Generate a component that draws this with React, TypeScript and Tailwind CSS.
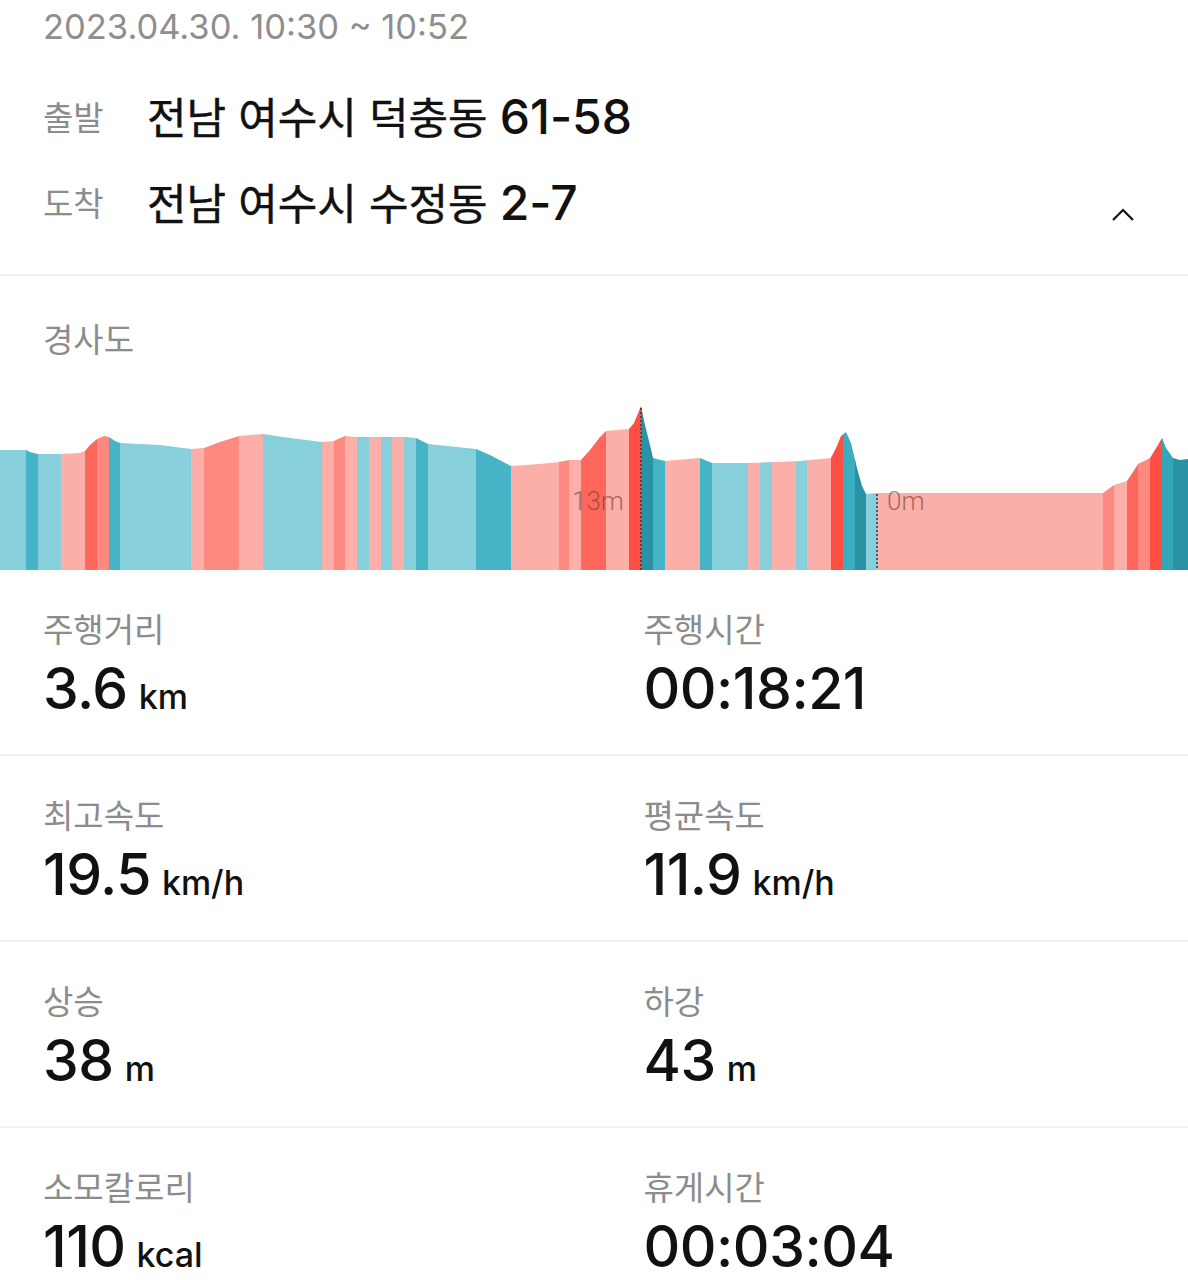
import React from 'react';

const L = '#86cfdb';
const T = '#45b4c7';
const D = '#2a93a3';
const P = '#fcaea9';
const S = '#fd8a80';
const R = '#ff675c';
const B = '#ff4f45';

// [start x, end x, colour] of each slope band
const BANDS: [number, number, string][] = [
  [0, 26, L], [26, 38, T], [38, 61, L], [61, 85, P], [85, 97, R], [97, 109, S],
  [109, 120, T], [120, 191, L], [191, 204, P], [204, 239, S], [239, 263, P],
  [263, 322, L], [322, 334, P], [334, 345, S], [345, 357, P], [357, 369, L],
  [369, 381, P], [381, 392, L], [392, 404, P], [404, 416, L], [416, 428, T],
  [428, 476, L], [476, 511, T], [511, 559, P], [559, 569, S], [569, 581, P],
  [581, 606, R], [606, 629, P], [629, 641, B], [641, 653, D], [653, 665, T],
  [665, 700, P], [700, 712, T], [712, 748, L], [748, 760, P], [760, 772, L],
  [772, 796, P], [796, 807, L], [807, 831, P], [831, 843, B], [843, 855, '#3aaec0'],
  [855, 866, D], [866, 877, L], [877, 1103, P], [1103, 1114, S], [1114, 1127, P],
  [1127, 1138, R], [1138, 1150, S], [1150, 1162, B], [1162, 1173, '#31a7b8'],
  [1173, 1188, D],
];

// elevation profile, page coordinates (chart spans y 380..570)
const PROFILE: [number, number][] = [
  [0, 450], [26, 450], [30, 452], [38, 454], [61, 454], [80, 453], [85, 451],
  [90, 445], [97, 439], [104, 436], [109, 437], [115, 441], [120, 443], [160, 445],
  [191, 449], [204, 448], [220, 442], [239, 436], [263, 434], [290, 438], [322, 442],
  [334, 441], [338, 439], [345, 436], [357, 437], [381, 437], [405, 437], [416, 438],
  [428, 444], [476, 449], [490, 455], [511, 466], [540, 464], [559, 462], [569, 460],
  [581, 460], [590, 450], [600, 437], [606, 431], [629, 429], [634, 423], [641, 406],
  [645, 425], [650, 445], [653, 458], [665, 461], [700, 458], [712, 463], [748, 463],
  [800, 461], [831, 458], [836, 448], [841, 436], [846, 432], [851, 443], [857, 468],
  [862, 486], [866, 494], [877, 493], [1103, 493], [1114, 485], [1127, 481],
  [1133, 472], [1138, 464], [1150, 458], [1158, 445], [1162, 438], [1166, 448],
  [1173, 458], [1180, 460], [1188, 459],
];

function SlopeChart() {
  const d =
    'M0 570 ' + PROFILE.map(([x, y]) => `L${x} ${y}`).join(' ') + ' L1188 570 Z';
  return (
    <svg width="1188" height="190" viewBox="0 380 1188 190" className="block">
      <defs>
        <clipPath id="profile">
          <path d={d} />
        </clipPath>
      </defs>
      <g clipPath="url(#profile)">
        {BANDS.map(([a, b, c]) => (
          <rect key={a} x={a} y={380} width={b - a + 0.5} height={190} fill={c} />
        ))}
      </g>
      <line x1="641" y1="408" x2="641" y2="570" stroke="#4a4a4a" strokeWidth="2" strokeDasharray="2 2" />
      <line x1="877" y1="494" x2="877" y2="570" stroke="#555" strokeWidth="2" strokeDasharray="2 2" />
      <text x="572" y="510" fontSize="26" fill="#6e3e3a" fillOpacity="0.65" fontFamily="Roboto, sans-serif" fontWeight="300">
        13m
      </text>
      <text x="887" y="510" fontSize="26" fill="#6e3e3a" fillOpacity="0.65" fontFamily="Roboto, sans-serif" fontWeight="300">
        0m
      </text>
    </svg>
  );
}

function Stat({ label, value, unit }: { label: string; value: string; unit?: string }) {
  return (
    <div className="flex flex-col">
      <span className="text-[33px] leading-[36px] text-[#8c8c8c]">{label}</span>
      <div className="mt-[11px] flex h-[60px] items-baseline font-medium leading-[60px] text-[#111]">
        <span className="text-[57px] tracking-[-0.5px]">{value}</span>
        {unit && <span className="ml-[11px] text-[34px] leading-none">{unit}</span>}
      </div>
    </div>
  );
}

const STATS: [string, string, string | undefined, string, string, string | undefined][] = [
  ['주행거리', '3.6', 'km', '주행시간', '00:18:21', undefined],
  ['최고속도', '19.5', 'km/h', '평균속도', '11.9', 'km/h'],
  ['상승', '38', 'm', '하강', '43', 'm'],
  ['소모칼로리', '110', 'kcal', '휴게시간', '00:03:04', undefined],
];

export default function App() {
  return (
    <div className="min-h-[1280px] w-[1188px] overflow-hidden bg-white font-['Inter','Noto_Sans_CJK_KR',sans-serif]">
      {/* 헤더 */}
      <div className="border-b-2 border-[#f2f2f2] px-[43px] pb-[42px] pt-[7px]">
        <div className="text-[34.5px] leading-[40px] text-[#8e8e8e]">2023.04.30. 10:30 ~ 10:52</div>
        <div className="mt-[43px] flex h-[56px] items-center">
          <span className="w-[104px] text-[33px] leading-[56px] text-[#8c8c8c]">출발</span>
          <span className="text-[43px] leading-[56px] text-[#111] [-webkit-text-stroke:0.4px_#111]">
            전남 여수시 덕충동{' '}
            <span className="text-[48px] font-medium leading-none [-webkit-text-stroke:0]">61-58</span>
          </span>
        </div>
        <div className="mt-[30px] flex h-[56px] items-center">
          <span className="w-[104px] text-[33px] leading-[56px] text-[#8c8c8c]">도착</span>
          <span className="text-[43px] leading-[56px] text-[#111] [-webkit-text-stroke:0.4px_#111]">
            전남 여수시 수정동{' '}
            <span className="text-[48px] font-medium leading-none [-webkit-text-stroke:0]">2-7</span>
          </span>
          <svg width="24" height="14" viewBox="0 0 24 14" className="ml-auto mr-[10px] mt-[22px]">
            <polyline points="2,12 12,2 22,12" fill="none" stroke="#111" strokeWidth="2.2" />
          </svg>
        </div>
      </div>

      {/* 경사도 */}
      <div className="pt-[46px]">
        <div className="px-[43px] text-[33px] leading-[36px] text-[#8c8c8c]">경사도</div>
        <div className="mt-[22px]">
          <SlopeChart />
        </div>
      </div>

      {/* 통계 */}
      {STATS.map(([l1, v1, u1, l2, v2, u2], i) => (
        <div
          key={l1}
          className={`grid grid-cols-2 pl-[43px] pt-[42px] ${i < STATS.length - 1 ? 'border-b-2 border-[#f2f2f2] pb-[35px]' : 'pb-[20px]'}`}
        >
          <Stat label={l1} value={v1} unit={u1} />
          <div className="pl-[28px]">
            <Stat label={l2} value={v2} unit={u2} />
          </div>
        </div>
      ))}
    </div>
  );
}
